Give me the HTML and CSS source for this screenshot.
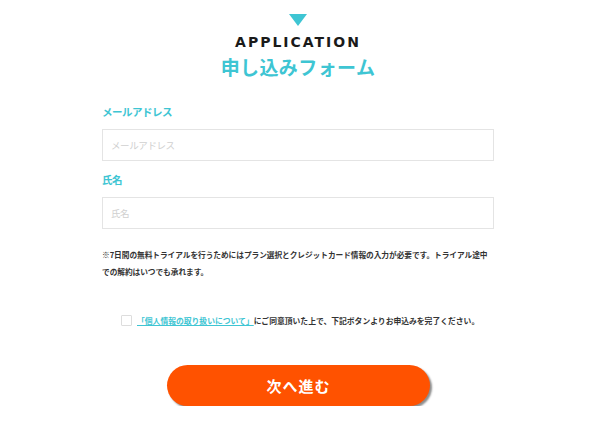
FILE: index.html
```html
<!DOCTYPE html>
<html lang="ja">
<head>
    <meta charset="UTF-8">
    <meta name="viewport" content="width=device-width, initial-scale=1.0">
    <title>申し込みフォーム</title>
    <link rel="stylesheet" href="styles.css">
</head>
<body>

    <form class="apply-form">
        <div class="heading">
            <span class="arrow"></span>
            <p class="heading-en">APPLICATION</p>
            <h1 class="heading-ja">申し込みフォーム</h1>
        </div>

        <div class="field field-first">
            <label for="email">メールアドレス</label>
            <input type="email" id="email" placeholder="メールアドレス">
        </div>

        <div class="field">
            <label for="name">氏名</label>
            <input type="text" id="name" placeholder="氏名">
        </div>

        <p class="note">※7日間の無料トライアルを行うためにはプラン選択とクレジットカード情報の入力が必要です。トライアル途中での解約はいつでも承れます。</p>

        <div class="agree">
            <input type="checkbox" id="agree">
            <label for="agree"><a href="#">「個人情報の取り扱いについて」</a>にご同意頂いた上で、下記ボタンよりお申込みを完了ください。</label>
        </div>

        <button type="submit">次へ進む</button>
    </form>

</body>
</html>
```

FILE: styles.css
```css
body {
    font-family: "Noto Sans CJK JP", "Noto Sans", sans-serif;
    margin: 0;
    padding: 0 4px 0 0;
    background-color: #fff;
    color: #333;
}
.apply-form {
    width: 392px;
    margin: 0 auto;
    padding-top: 14px;
    display: flex;
    flex-direction: column;
}
.heading {
    display: flex;
    flex-direction: column;
    align-items: center;
}
.arrow {
    width: 0;
    height: 0;
    border-left: 9.5px solid transparent;
    border-right: 9.5px solid transparent;
    border-top: 12px solid #3ec5d3;
}
.heading-en {
    margin: 8px 0 0;
    font-family: "DejaVu Sans", sans-serif;
    font-weight: bold;
    font-size: 14px;
    line-height: 17px;
    letter-spacing: 2px;
    color: #1a1a1a;
}
.heading-ja {
    margin: 2px 0 0;
    font-size: 19px;
    line-height: 28px;
    font-weight: bold;
    letter-spacing: 0.4px;
    color: #3ec5d3;
}
.field {
    display: flex;
    flex-direction: column;
}
.field-first {
    margin-top: 23px;
}
.field + .field {
    margin-top: 11px;
}
.field label {
    font-size: 10.5px;
    line-height: 16px;
    letter-spacing: -0.5px;
    font-weight: bold;
    color: #3ec5d3;
    margin-bottom: 9px;
}
.field input {
    height: 32px;
    box-sizing: border-box;
    border: 1px solid #e4e4e4;
    border-radius: 0;
    padding: 0 8px;
    font-family: inherit;
    font-size: 9.5px;
    letter-spacing: -0.4px;
    color: #333;
}
.field input::placeholder {
    color: #d0d0d0;
}
.note {
    margin: 17px 0 0;
    font-size: 7.7px;
    line-height: 17px;
    letter-spacing: -0.05px;
    font-weight: bold;
    color: #333;
}
.agree {
    display: flex;
    align-items: center;
    margin: 35px 0 0 19px;
    font-size: 7.8px;
    font-weight: bold;
    color: #333;
}
.agree input {
    appearance: none;
    width: 11px;
    height: 11px;
    margin: 0 5px 0 0;
    border: 1px solid #ddd;
    border-radius: 1px;
    background: #fff;
}
.agree a {
    color: #3ec5d3;
    text-decoration: underline;
}
button[type="submit"] {
    align-self: center;
    width: 263px;
    height: 41px;
    margin: 39px 0 0 1px;
    border: none;
    border-radius: 21px;
    background-color: #ff5200;
    box-shadow: 2px 2px 2px rgba(0, 0, 0, 0.45);
    color: white;
    font-family: inherit;
    font-size: 15px;
    font-weight: bold;
    letter-spacing: 1px;
    cursor: pointer;
}
```
